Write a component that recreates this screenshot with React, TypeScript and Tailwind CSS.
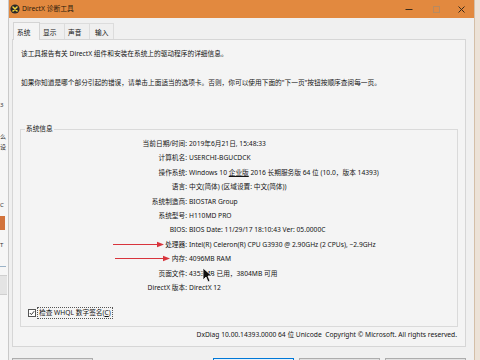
import React from "react";

const rows: [string, React.ReactNode][] = [
  ["当前日期/时间:", "2019年6月21日, 15:48:33"],
  ["计算机名:", "USERCHI-BGUCDCK"],
  [
    "操作系统:",
    <>
      Windows 10 <span className="underline">企业版</span> 2016 长期服务版 64 位 (10.0，版本 14393)
    </>,
  ],
  ["语言:", "中文(简体) (区域设置: 中文(简体))"],
  ["系统制造商:", "BIOSTAR Group"],
  ["系统型号:", "H110MD PRO"],
  ["BIOS:", "BIOS Date: 11/29/17 18:10:43 Ver: 05.0000C"],
  ["处理器:", "Intel(R) Celeron(R) CPU G3930 @ 2.90GHz (2 CPUs), ~2.9GHz"],
  ["内存:", "4096MB RAM"],
  ["页面文件:", "4353MB 已用，3804MB 可用"],
  ["DirectX 版本:", "DirectX 12"],
];

function RedArrow({ left, top, width }: { left: number; top: number; width: number }) {
  return (
    <svg
      className="absolute"
      style={{ left, top }}
      width={width}
      height={7}
      viewBox={`0 0 ${width} 7`}
    >
      <line x1="0" y1="3.5" x2={width - 5} y2="3.5" stroke="#d8343c" strokeWidth="1.2" />
      <polygon points={`${width - 7},0.8 ${width},3.5 ${width - 7},6.2`} fill="#d8343c" />
    </svg>
  );
}

export default function App() {
  return (
    <div className="relative w-[480px] h-[360px] overflow-hidden bg-[#f4f4f4] text-[#151515] font-['Noto_Sans','Noto_Sans_CJK_SC',sans-serif] text-[6.7px] leading-[10px]">
      <div className="flex h-full">
        {/* left strip: other window behind */}
        <div className="w-[9px] shrink-0 flex flex-col bg-[#f6f6f6] border-r border-[#c9c9c9] overflow-hidden text-[#333] text-[6px]">
          <div className="h-[100px]" />
          <div>3</div>
          <div className="h-[22px]" />
          <div>么</div>
          <div>设</div>
          <div className="h-[48px]" />
          <div>C</div>
          <div className="h-[6px]" />
          <div className="h-[14px] bg-[#d2733c] w-[5px]" />
          <div className="h-[10px]" />
          <div>T</div>
          <div className="h-[16px]" />
          <div className="h-px bg-[#9bb3c8] w-[6px]" />
          <div className="h-[8px]" />
          <div className="h-[20px] border-y border-[#cfcfcf] bg-[#e4e4e4] w-[7px]" />
        </div>

        {/* main window */}
        <div className="w-[465px] shrink-0 flex flex-col bg-[#f0f0f0]">
          {/* title bar */}
          <div className="h-[18px] shrink-0 bg-[#e2893f] flex items-center text-[#2a1a0c]">
            <svg width="10" height="10" viewBox="0 0 10 10" className="ml-[1px]">
              <circle cx="5" cy="5" r="4.6" fill="#2a2a2a" />
              <path d="M3 3 L7 7 M7 3 L3 7" stroke="#f0d23c" strokeWidth="1.6" strokeLinecap="round" />
            </svg>
            <span className="ml-[2px] text-[6.8px]">DirectX 诊断工具</span>
            <div className="flex-1" />
            <svg width="8" height="8" viewBox="0 0 8 8" className="mr-[20px]">
              <line x1="0.5" y1="4.5" x2="7.5" y2="4.5" stroke="#3a2a1a" strokeWidth="1" />
            </svg>
            <svg width="7" height="7" viewBox="0 0 7 7" className="mr-[18px]">
              <rect x="0.5" y="0.5" width="6" height="6" fill="none" stroke="#b88a60" strokeWidth="1" />
            </svg>
            <svg width="7" height="7" viewBox="0 0 7 7" className="mr-[9px]">
              <path d="M0.5 0.5 L6.5 6.5 M6.5 0.5 L0.5 6.5" stroke="#3a2a1a" strokeWidth="1" />
            </svg>
          </div>

          {/* tabs */}
          <div className="flex items-end h-[21px] pl-[4px] shrink-0">
            <div className="relative z-10 w-[27px] h-[18px] -mb-px bg-[#f4f4f4] border border-b-0 border-[#d4d4d4] pl-[3px] pt-[5px]">
              系统
            </div>
            <div className="w-[25px] h-[16px] border-t border-r border-[#dcdcdc] bg-[#efefef] pl-[3px] pt-[4px]">显示</div>
            <div className="w-[25px] h-[16px] border-t border-r border-[#dcdcdc] bg-[#efefef] pl-[3px] pt-[4px]">声音</div>
            <div className="w-[24px] h-[16px] border-t border-r border-[#dcdcdc] bg-[#efefef] pl-[5px] pt-[4px]">输入</div>
          </div>

          {/* tab panel */}
          <div className="ml-[3px] mr-[8px] bg-[#f4f4f4] border border-[#d6d6d6] px-[7px] pt-[9px] pb-[6px]">
            <div className="pl-px">该工具报告有关 DirectX 组件和安装在系统上的驱动程序的详细信息。</div>
            <div className="mt-[19px] pl-px">
              如果你知道是哪个部分引起的错误，请单击上面适当的选项卡。否则，你可以使用下面的"下一页"按钮按顺序查阅每一页。
            </div>

            <fieldset className="mt-[36px] border border-[#dadada] pb-[7px]">
              <legend className="ml-[4px] px-px leading-[10px]">系统信息</legend>
              <div className="pt-[3px] grid grid-cols-[166px_1fr] gap-x-[2px]">
                {rows.map(([k, v]) => (
                  <React.Fragment key={k}>
                    <div className="text-right leading-[14.4px] whitespace-nowrap">{k}</div>
                    <div className="leading-[14.4px] whitespace-nowrap">{v}</div>
                  </React.Fragment>
                ))}
              </div>
              <div className="mt-[12px] ml-[7px] flex items-center h-[12px]">
                <div className="w-[8px] h-[8px] border border-[#555] bg-white flex items-center justify-center">
                  <svg width="6" height="6" viewBox="0 0 6 6">
                    <path d="M0.8 3 L2.4 4.6 L5.2 1.2" fill="none" stroke="#222" strokeWidth="0.9" />
                  </svg>
                </div>
                <div className="ml-px px-px border border-dotted border-[#555] leading-[10px]">
                  检查 WHQL 数字签名(<span className="underline">C</span>)
                </div>
              </div>
            </fieldset>

            <div className="mt-[3px] pr-px text-right">
              DxDiag 10.00.14393.0000 64 位 Unicode&nbsp;&nbsp;Copyright © Microsoft. All rights reserved.
            </div>
          </div>

          {/* buttons (only their top edges are in view) */}
          <div className="mt-[11px] ml-[3px] flex">
            <div className="w-[81px] h-[20px] bg-[#e1e1e1] border border-[#adadad]" />
            <div className="ml-[120px] w-[81px] h-[20px] bg-[#e5f1fb] border border-[#0078d7]" />
            <div className="ml-[5px] w-[81px] h-[20px] bg-[#e1e1e1] border border-[#adadad]" />
            <div className="ml-[5px] w-[81px] h-[20px] bg-[#e1e1e1] border border-[#adadad]" />
          </div>
        </div>

        {/* right strip */}
        <div className="flex-1 bg-[#ece2d7] border-l border-[#d4bfa8]" />
      </div>

      {/* annotations over the screenshot */}
      <RedArrow left={113} top={241} width={51} />
      <RedArrow left={115} top={255} width={55} />
      <svg className="absolute left-[202px] top-[267px]" width="10" height="16" viewBox="0 0 10 16">
        <path d="M1 1 L1 13 L4 10 L6 15 L8 14 L6 9 L10 9 Z" fill="#111" stroke="#fff" strokeWidth="0.8" />
      </svg>
    </div>
  );
}
